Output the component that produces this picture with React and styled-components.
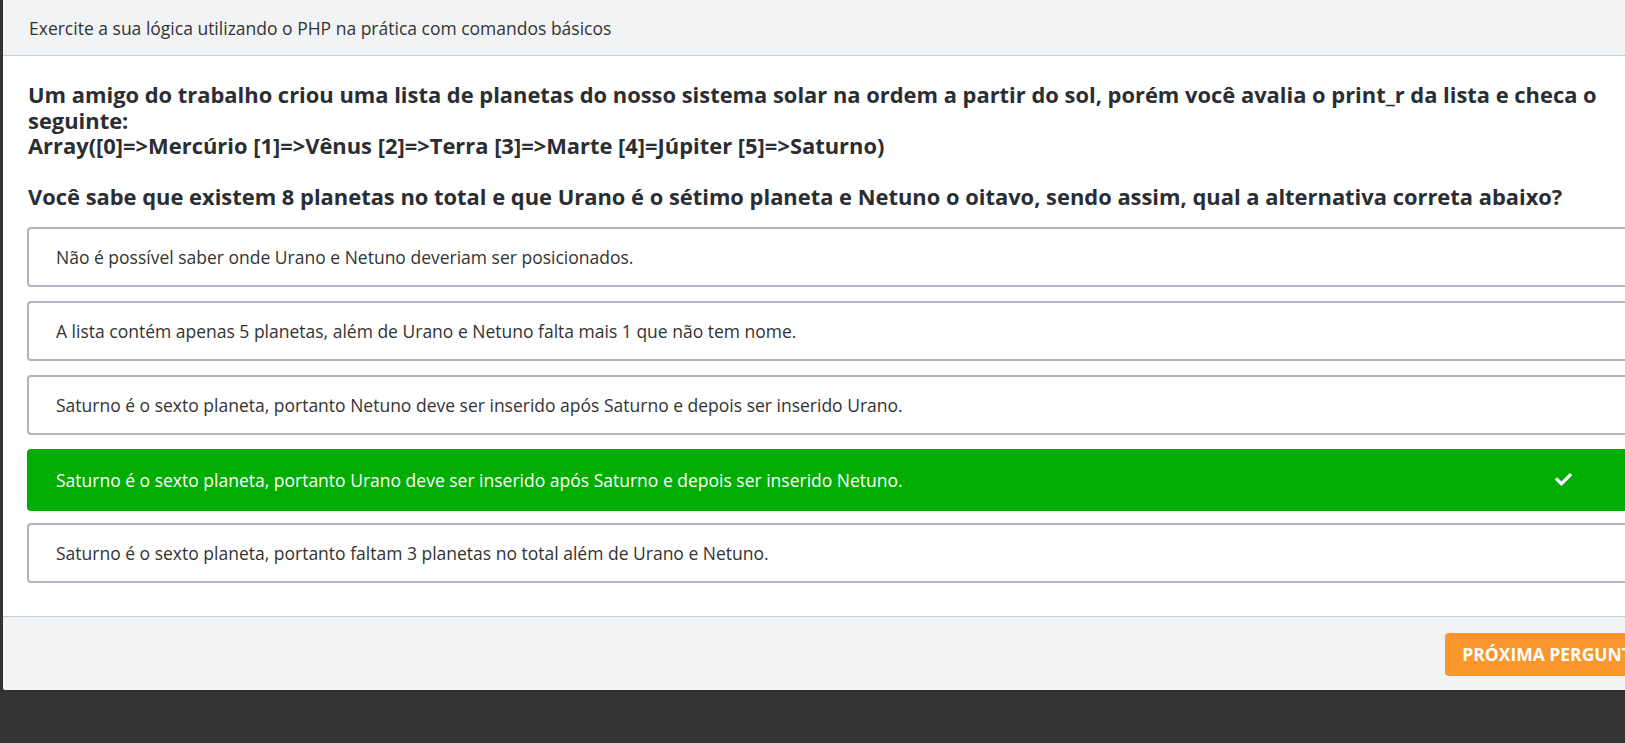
import React from "react";
import styled, { createGlobalStyle } from "styled-components";
import { FaCheck } from "react-icons/fa";

const GlobalStyle = createGlobalStyle`
    html, body {
        margin: 0;
        padding: 0;
        background-color: #333333;
        overflow: hidden;
    }
    * {
        box-sizing: border-box;
    }
`;

const Page = styled.div`
    width: 100vw;
    height: 100vh;
    padding-left: 3px;
    overflow: hidden;
    font-family: "Open Sans", "Liberation Sans", sans-serif;
`;

const Modal = styled.div`
    width: 1682px;
    background-color: white;
    border-radius: 0 0 0 3px;
    overflow: hidden;
`;

const Header = styled.div`
    height: 56px;
    display: flex;
    align-items: center;
    padding: 0 26px;
    background-color: #f2f3f5;
    border-bottom: 1px solid #cdd0d4;
    color: #333;
    font-size: 17.5px;
`;

const Body = styled.div`
    padding: 26px 24px 33px 24px;
`;

const Question = styled.h2`
    margin: 0 0 17px 1px;
    font-size: 21.9px;
    line-height: 25.6px;
    font-weight: 700;
    color: #2a2e33;
`;

const Option = styled.div`
    height: ${(p) => (p.$correct ? "62px" : "60px")};
    display: flex;
    align-items: center;
    justify-content: space-between;
    padding: 0 87px 0 27px;
    margin-bottom: ${(p) => (p.$correct ? "12px" : "14px")};
    border: 2px solid ${(p) => (p.$correct ? "#00ad00" : "#aeb4bb")};
    border-radius: 4px;
    background-color: ${(p) => (p.$correct ? "#00ad00" : "white")};
    color: ${(p) => (p.$correct ? "white" : "#333")};
    font-size: 17.5px;
    cursor: pointer;
    &:last-child {
        margin-bottom: 0;
    }
`;

const Footer = styled.div`
    height: 74px;
    display: flex;
    justify-content: flex-end;
    align-items: flex-start;
    padding: 16px 24px 0 0;
    background-color: #f2f3f5;
    border-top: 1px solid #c9ccd0;
`;

const NextButton = styled.button`
    height: 43px;
    padding: 0 17px;
    border: none;
    border-radius: 4px;
    background-color: #f9962c;
    color: white;
    font-family: "Open Sans", "Liberation Sans", sans-serif;
    font-size: 17.5px;
    font-weight: 700;
    text-transform: uppercase;
    white-space: nowrap;
    cursor: pointer;
`;

const options = [
    { text: "Não é possível saber onde Urano e Netuno deveriam ser posicionados." },
    { text: "A lista contém apenas 5 planetas, além de Urano e Netuno falta mais 1 que não tem nome." },
    { text: "Saturno é o sexto planeta, portanto Netuno deve ser inserido após Saturno e depois ser inserido Urano." },
    { text: "Saturno é o sexto planeta, portanto Urano deve ser inserido após Saturno e depois ser inserido Netuno.", correct: true },
    { text: "Saturno é o sexto planeta, portanto faltam 3 planetas no total além de Urano e Netuno." },
];

function App() {
    return (
        <Page>
            <GlobalStyle />
            <Modal>
                <Header>Exercite a sua lógica utilizando o PHP na prática com comandos básicos</Header>
                <Body>
                    <Question>
                        Um amigo do trabalho criou uma lista de planetas do nosso sistema solar na ordem a partir do sol, porém você avalia o print_r da lista e checa o seguinte:
                        <br />
                        Array([0]=&gt;Mercúrio [1]=&gt;Vênus [2]=&gt;Terra [3]=&gt;Marte [4]=Júpiter [5]=&gt;Saturno)
                        <br />
                        <br />
                        Você sabe que existem 8 planetas no total e que Urano é o sétimo planeta e Netuno o oitavo, sendo assim, qual a alternativa correta abaixo?
                    </Question>
                    {options.map((opt, i) => (
                        <Option key={i} $correct={opt.correct}>
                            <span>{opt.text}</span>
                            {opt.correct && <FaCheck size={17} />}
                        </Option>
                    ))}
                </Body>
                <Footer>
                    <NextButton>Próxima pergunta</NextButton>
                </Footer>
            </Modal>
        </Page>
    );
}

export default App;
